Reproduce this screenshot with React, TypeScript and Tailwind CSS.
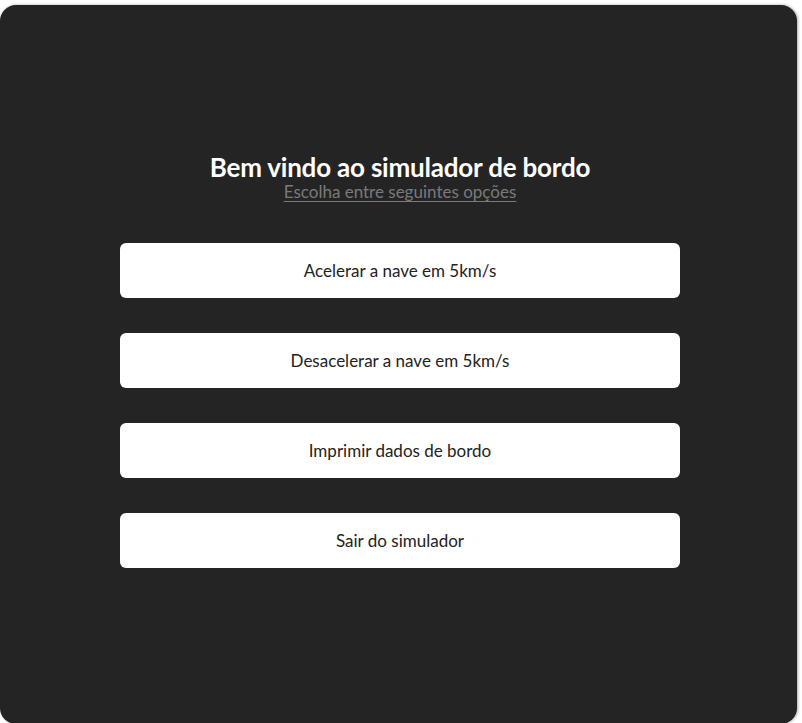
import React from 'react'

const options = [
  'Acelerar a nave em 5km/s',
  'Desacelerar a nave em 5km/s',
  'Imprimir dados de bordo',
  'Sair do simulador',
]

export default function App() {
  return (
    <div className="w-[802px] h-[723px] bg-white pt-[5px] overflow-hidden font-['Lato',sans-serif]">
      <div className="w-[797px] h-[719px] rounded-[16px] bg-[#242424] shadow-[1px_0_3px_rgba(0,0,0,0.35)] flex flex-col items-center pl-[3px] pt-[147px]">
        <h1 className="text-white text-[26px] font-bold leading-[30px] tracking-[-0.2px]">
          Bem vindo ao simulador de bordo
        </h1>
        <p className="text-[#7a7a7a] text-[17px] leading-[20px] underline underline-offset-[3px]">
          Escolha entre seguintes opções
        </p>
        <div className="flex flex-col gap-[35px] mt-[41px]">
          {options.map(option => (
            <button
              key={option}
              className="w-[560px] h-[55px] rounded-[6px] bg-white text-[#222] text-[17px] flex items-center justify-center"
            >
              {option}
            </button>
          ))}
        </div>
      </div>
    </div>
  )
}
